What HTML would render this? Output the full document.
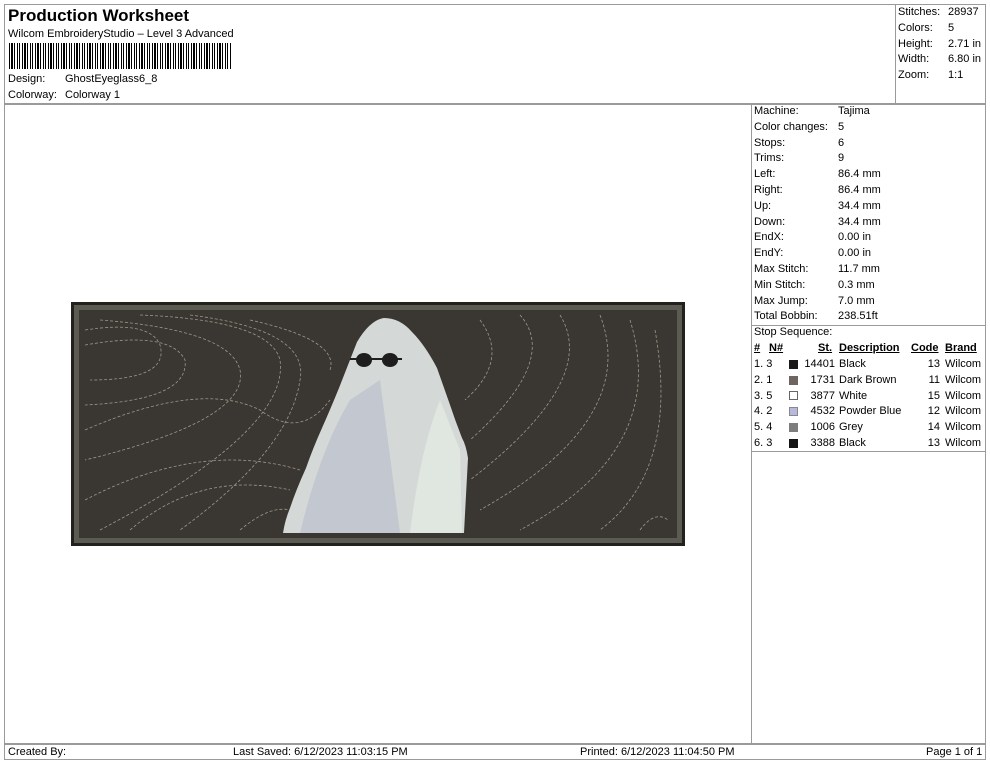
<!DOCTYPE html>
<html><head><meta charset="utf-8"><style>
*{margin:0;padding:0;box-sizing:border-box}
body{width:990px;height:762px;background:#fff;font-family:"Liberation Sans",Arial,sans-serif;font-size:11px;color:#000;position:relative;overflow:hidden}
.a{position:absolute;white-space:nowrap}
.l{position:absolute;background:#9a9a9a}
.r{position:absolute;left:754px;width:230px;height:15.8px;line-height:15.8px;white-space:nowrap}
.r span{position:absolute;left:84px;white-space:nowrap}
.t{position:absolute;height:15.8px;line-height:15.8px;white-space:nowrap}
.sw{position:absolute;width:9px;height:9px;left:789px}
</style></head><body>
<div class="l" style="left:4px;top:4px;width:982px;height:1px"></div>
<div class="l" style="left:4px;top:4px;width:1px;height:756px"></div>
<div class="l" style="left:985px;top:4px;width:1px;height:756px"></div>
<div class="l" style="left:4px;top:759px;width:982px;height:1px"></div>
<div class="l" style="left:4px;top:103px;width:982px;height:2px"></div>
<div class="l" style="left:895px;top:4px;width:1px;height:100px"></div>
<div class="l" style="left:751px;top:104px;width:1px;height:640px"></div>
<div class="l" style="left:4px;top:743px;width:982px;height:2px"></div>
<div class="l" style="left:752px;top:325px;width:234px;height:1px"></div>
<div class="l" style="left:752px;top:451px;width:234px;height:1px"></div>

<div class="a" style="left:8px;top:6px;font-size:17px;font-weight:bold">Production Worksheet</div>
<div class="a" style="left:8px;top:28px">Wilcom EmbroideryStudio – Level 3 Advanced</div>
<div class="a" style="left:9px;top:43px;width:223px;height:26px;background:repeating-linear-gradient(90deg,#000 0 1px,#fff 1px 2px,#000 2px 4px,#fff 4px 5px,#000 5px 6px,#fff 6px 8px,#000 8px 9px,#fff 9px 10px,#000 10px 11px,#fff 11px 13px)"></div>
<div class="a" style="left:8px;top:73px">Design:</div><div class="a" style="left:65px;top:73px">GhostEyeglass6_8</div>
<div class="a" style="left:8px;top:89px">Colorway:</div><div class="a" style="left:65px;top:89px">Colorway 1</div>

<div class="a" style="left:898px;top:5px;line-height:15.8px">Stitches:<br>Colors:<br>Height:<br>Width:<br>Zoom:</div>
<div class="a" style="left:948px;top:5px;line-height:15.8px">28937<br>5<br>2.71 in<br>6.80 in<br>1:1</div>

<div class="r" style="top:104px">Machine:<span>Tajima</span></div>
<div class="r" style="top:119.8px">Color changes:<span>5</span></div>
<div class="r" style="top:135.6px">Stops:<span>6</span></div>
<div class="r" style="top:151.4px">Trims:<span>9</span></div>
<div class="r" style="top:167.2px">Left:<span>86.4 mm</span></div>
<div class="r" style="top:183px">Right:<span>86.4 mm</span></div>
<div class="r" style="top:198.8px">Up:<span>34.4 mm</span></div>
<div class="r" style="top:214.6px">Down:<span>34.4 mm</span></div>
<div class="r" style="top:230.4px">EndX:<span>0.00 in</span></div>
<div class="r" style="top:246.2px">EndY:<span>0.00 in</span></div>
<div class="r" style="top:262px">Max Stitch:<span>11.7 mm</span></div>
<div class="r" style="top:277.8px">Min Stitch:<span>0.3 mm</span></div>
<div class="r" style="top:293.6px">Max Jump:<span>7.0 mm</span></div>
<div class="r" style="top:309.4px">Total Bobbin:<span>238.51ft</span></div>
<div class="t" style="left:754px;top:325px">Stop Sequence:</div>
<div class="t" style="left:754px;top:341px;font-weight:bold;text-decoration:underline">#</div>
<div class="t" style="left:769px;top:341px;font-weight:bold;text-decoration:underline">N#</div>
<div class="t" style="left:818px;top:341px;font-weight:bold;text-decoration:underline">St.</div>
<div class="t" style="left:839px;top:341px;font-weight:bold;text-decoration:underline">Description</div>
<div class="t" style="left:911px;top:341px;font-weight:bold;text-decoration:underline">Code</div>
<div class="t" style="left:945px;top:341px;font-weight:bold;text-decoration:underline">Brand</div>
<div class="t" style="left:754px;top:357px;line-height:15.8px;height:auto">1. 3<br>2. 1<br>3. 5<br>4. 2<br>5. 4<br>6. 3</div>
<div class="t" style="left:795px;width:40px;text-align:right;top:357px;line-height:15.8px;height:auto">14401<br>1731<br>3877<br>4532<br>1006<br>3388</div>
<div class="t" style="left:839px;top:357px;line-height:15.8px;height:auto">Black<br>Dark Brown<br>White<br>Powder Blue<br>Grey<br>Black</div>
<div class="t" style="left:910px;width:30px;text-align:right;top:357px;line-height:15.8px;height:auto">13<br>11<br>15<br>12<br>14<br>13</div>
<div class="t" style="left:945px;top:357px;line-height:15.8px;height:auto">Wilcom<br>Wilcom<br>Wilcom<br>Wilcom<br>Wilcom<br>Wilcom</div>
<div class="sw" style="top:360px;background:#1a1a1a"></div>
<div class="sw" style="top:376px;background:#6e6460"></div>
<div class="sw" style="top:391px;background:#fff;border:1px solid #666"></div>
<div class="sw" style="top:407px;background:#b8b8dc;border:1px solid #888"></div>
<div class="sw" style="top:423px;background:#7d7d7d"></div>
<div class="sw" style="top:439px;background:#151515"></div>

<div class="a" style="left:8px;top:746px">Created By:</div>
<div class="a" style="left:233px;top:746px">Last Saved: 6/12/2023 11:03:15 PM</div>
<div class="a" style="left:580px;top:746px">Printed: 6/12/2023 11:04:50 PM</div>
<div class="a" style="left:926px;top:746px">Page 1 of 1</div>

<svg class="a" style="left:0;top:0" width="990" height="762">
<rect x="71" y="302" width="614" height="244" fill="#22211d"/>
<rect x="74" y="305" width="608" height="238" fill="#5c5b52"/>
<rect x="79" y="310" width="598" height="228" fill="#3a3631"/>
<g fill="none" stroke="#b8b0a0" stroke-width="0.8" stroke-dasharray="3 2" opacity="0.8">
<path d="M85 330 Q150 320 160 345 Q170 380 90 380"/>
<path d="M85 345 Q170 330 185 360 Q190 400 85 405"/>
<path d="M85 430 Q200 380 260 410 Q300 440 330 400"/>
<path d="M100 320 Q230 330 240 370 Q250 420 85 460"/>
<path d="M140 315 Q270 320 280 360 Q290 430 100 530"/>
<path d="M190 315 Q310 330 300 380 Q290 450 180 530"/>
<path d="M250 320 Q340 340 330 370"/>
<path d="M85 500 Q200 440 300 470"/>
<path d="M130 530 Q200 470 290 490"/>
<path d="M240 530 Q270 505 290 510"/>
<path d="M520 315 Q560 360 470 440"/>
<path d="M560 315 Q600 380 470 480"/>
<path d="M600 315 Q640 420 480 510"/>
<path d="M630 320 Q670 450 520 530"/>
<path d="M655 330 Q680 470 600 530"/>
<path d="M480 320 Q510 360 465 400"/>
<path d="M640 530 Q655 510 668 520"/>
</g>
<path d="M384 318 Q370 320 357 342 Q348 365 339 388 Q330 410 322 428 Q313 448 306 468 Q296 490 290 508 Q285 520 283 533 L464 533 Q466 495 468 458 Q466 445 462 438 Q455 420 449 402 Q443 385 437 368 Q425 345 412 332 Q400 318 384 318Z" fill="#d4d8d6"/>
<path d="M300 533 Q320 450 350 400 L380 380 L400 533Z" fill="#b8bccc" opacity="0.6"/>
<path d="M410 533 Q420 450 440 400 L460 450 L462 533Z" fill="#e6ece4" opacity="0.7"/>
<g fill="#1e1e1e"><ellipse cx="364" cy="360" rx="8" ry="7"/><ellipse cx="390" cy="360" rx="8" ry="7"/><rect x="350" y="358" width="52" height="2"/></g>
</svg>
</body></html>
